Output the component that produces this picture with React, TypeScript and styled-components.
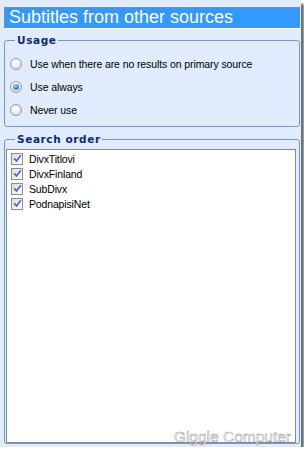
import React from "react";
import styled, { createGlobalStyle } from "styled-components";

const Global = createGlobalStyle`
  html, body { margin: 0; padding: 0; background: #ffffff; }
  body { font-family: "Liberation Sans", Arial, sans-serif; }
`;

const Window = styled.div`
  position: relative;
  box-sizing: border-box;
  width: 301px;
  height: 447px;
  padding: 7px 1px 3px 4px;
  background: #e0ebfb;
  box-shadow: 3px 4px 2px rgba(60, 60, 60, 0.75);
  display: flex;
  flex-direction: column;
`;

const TitleBar = styled.div`
  box-sizing: border-box;
  height: 22px;
  background: #3399ff;
  border-top: 1px solid #8c8c8c;
  border-left: 1px solid #8c8c8c;
  border-bottom: 1px solid #ffffff;
  color: #ffffff;
  font-family: "Liberation Sans", Arial, sans-serif;
  font-size: 18px;
  line-height: 19px;
  padding-left: 4px;
  white-space: nowrap;
`;

const Group = styled.fieldset<{ $gap: number; $fill?: boolean }>`
  box-sizing: border-box;
  margin: ${(p) => p.$gap}px 0 0 0;
  padding: 0;
  border: 1px solid #7096d4;
  border-radius: 3px;
  min-width: 0;
  ${(p) => (p.$fill ? "flex: 1; display: flex; flex-direction: column;" : "")}
`;

const Legend = styled.legend`
  margin-left: 10px;
  padding: 0 1px 0 2px;
  font-family: "DejaVu Sans", Verdana, sans-serif;
  font-weight: bold;
  font-size: 10.5px;
  line-height: 12px;
  letter-spacing: 0.6px;
  color: #0c2a78;
`;

const RadioList = styled.div`
  display: flex;
  flex-direction: column;
  padding: 6px 0 5px 5px;
`;

const RadioRow = styled.label`
  display: flex;
  align-items: center;
  height: 23px;
  gap: 8px;
  font-family: "Liberation Sans", Arial, sans-serif;
  font-size: 10.5px;
  letter-spacing: -0.1px;
  color: #000000;
`;

const RadioDot = styled.span<{ $on?: boolean }>`
  box-sizing: border-box;
  width: 12px;
  height: 12px;
  border-radius: 50%;
  border: 1px solid #9a9a9a;
  background: radial-gradient(circle at 40% 35%, #ffffff 0%, #f0f0f0 45%, #c9c9c9 100%);
  display: flex;
  align-items: center;
  justify-content: center;
  flex: none;
  &::after {
    content: "";
    display: ${(p) => (p.$on ? "block" : "none")};
    width: 6px;
    height: 6px;
    border-radius: 50%;
    background: radial-gradient(circle at 40% 35%, #a8e0ff 0%, #2a9be6 45%, #0b5fb0 100%);
  }
`;

const ListBox = styled.div`
  flex: 1;
  box-sizing: border-box;
  margin: 4px 3px 0 1px;
  background: #ffffff;
  border: 1px solid #8a8a8a;
  padding: 1px 0 0 4px;
  display: flex;
  flex-direction: column;
`;

const CheckRow = styled.label`
  display: flex;
  align-items: center;
  height: 15px;
  gap: 6px;
  font-family: "Liberation Sans", Arial, sans-serif;
  font-size: 10.5px;
  letter-spacing: -0.15px;
  color: #000000;
`;

const CheckBox = styled.span`
  box-sizing: border-box;
  width: 12px;
  height: 12px;
  border: 1px solid #8d8d8d;
  background: linear-gradient(135deg, #dcdcdc 0%, #f2f2f2 60%, #ffffff 100%);
  display: flex;
  align-items: center;
  justify-content: center;
  flex: none;
`;

const Watermark = styled.div`
  position: absolute;
  right: 10px;
  bottom: 1px;
  font-family: "Liberation Sans", Arial, sans-serif;
  font-size: 15.5px;
  line-height: 18px;
  color: #ffffff;
  -webkit-text-stroke: 0.45px #8f8f8f;
  white-space: nowrap;
`;

const Check = () => (
  <svg width="9" height="9" viewBox="0 0 9 9">
    <path d="M1.2 4.4 L3.5 6.9 L7.8 1.3" fill="none" stroke="#4165c8" strokeWidth="1.6" />
  </svg>
);

const radios = [
  { label: "Use when there are no results on primary source", on: false },
  { label: "Use always", on: true },
  { label: "Never use", on: false },
];

const sources = ["DivxTitlovi", "DivxFinland", "SubDivx", "PodnapisiNet"];

export default function App() {
  return (
    <>
      <Global />
      <Window>
        <TitleBar>Subtitles from other sources</TitleBar>
        <Group $gap={5}>
          <Legend>Usage</Legend>
          <RadioList>
            {radios.map((r) => (
              <RadioRow key={r.label}>
                <RadioDot $on={r.on} />
                {r.label}
              </RadioRow>
            ))}
          </RadioList>
        </Group>
        <Group $gap={6} $fill>
          <Legend>Search order</Legend>
          <ListBox>
            {sources.map((s) => (
              <CheckRow key={s}>
                <CheckBox>
                  <Check />
                </CheckBox>
                {s}
              </CheckRow>
            ))}
          </ListBox>
        </Group>
        <Watermark>Giggle Computer</Watermark>
      </Window>
    </>
  );
}
